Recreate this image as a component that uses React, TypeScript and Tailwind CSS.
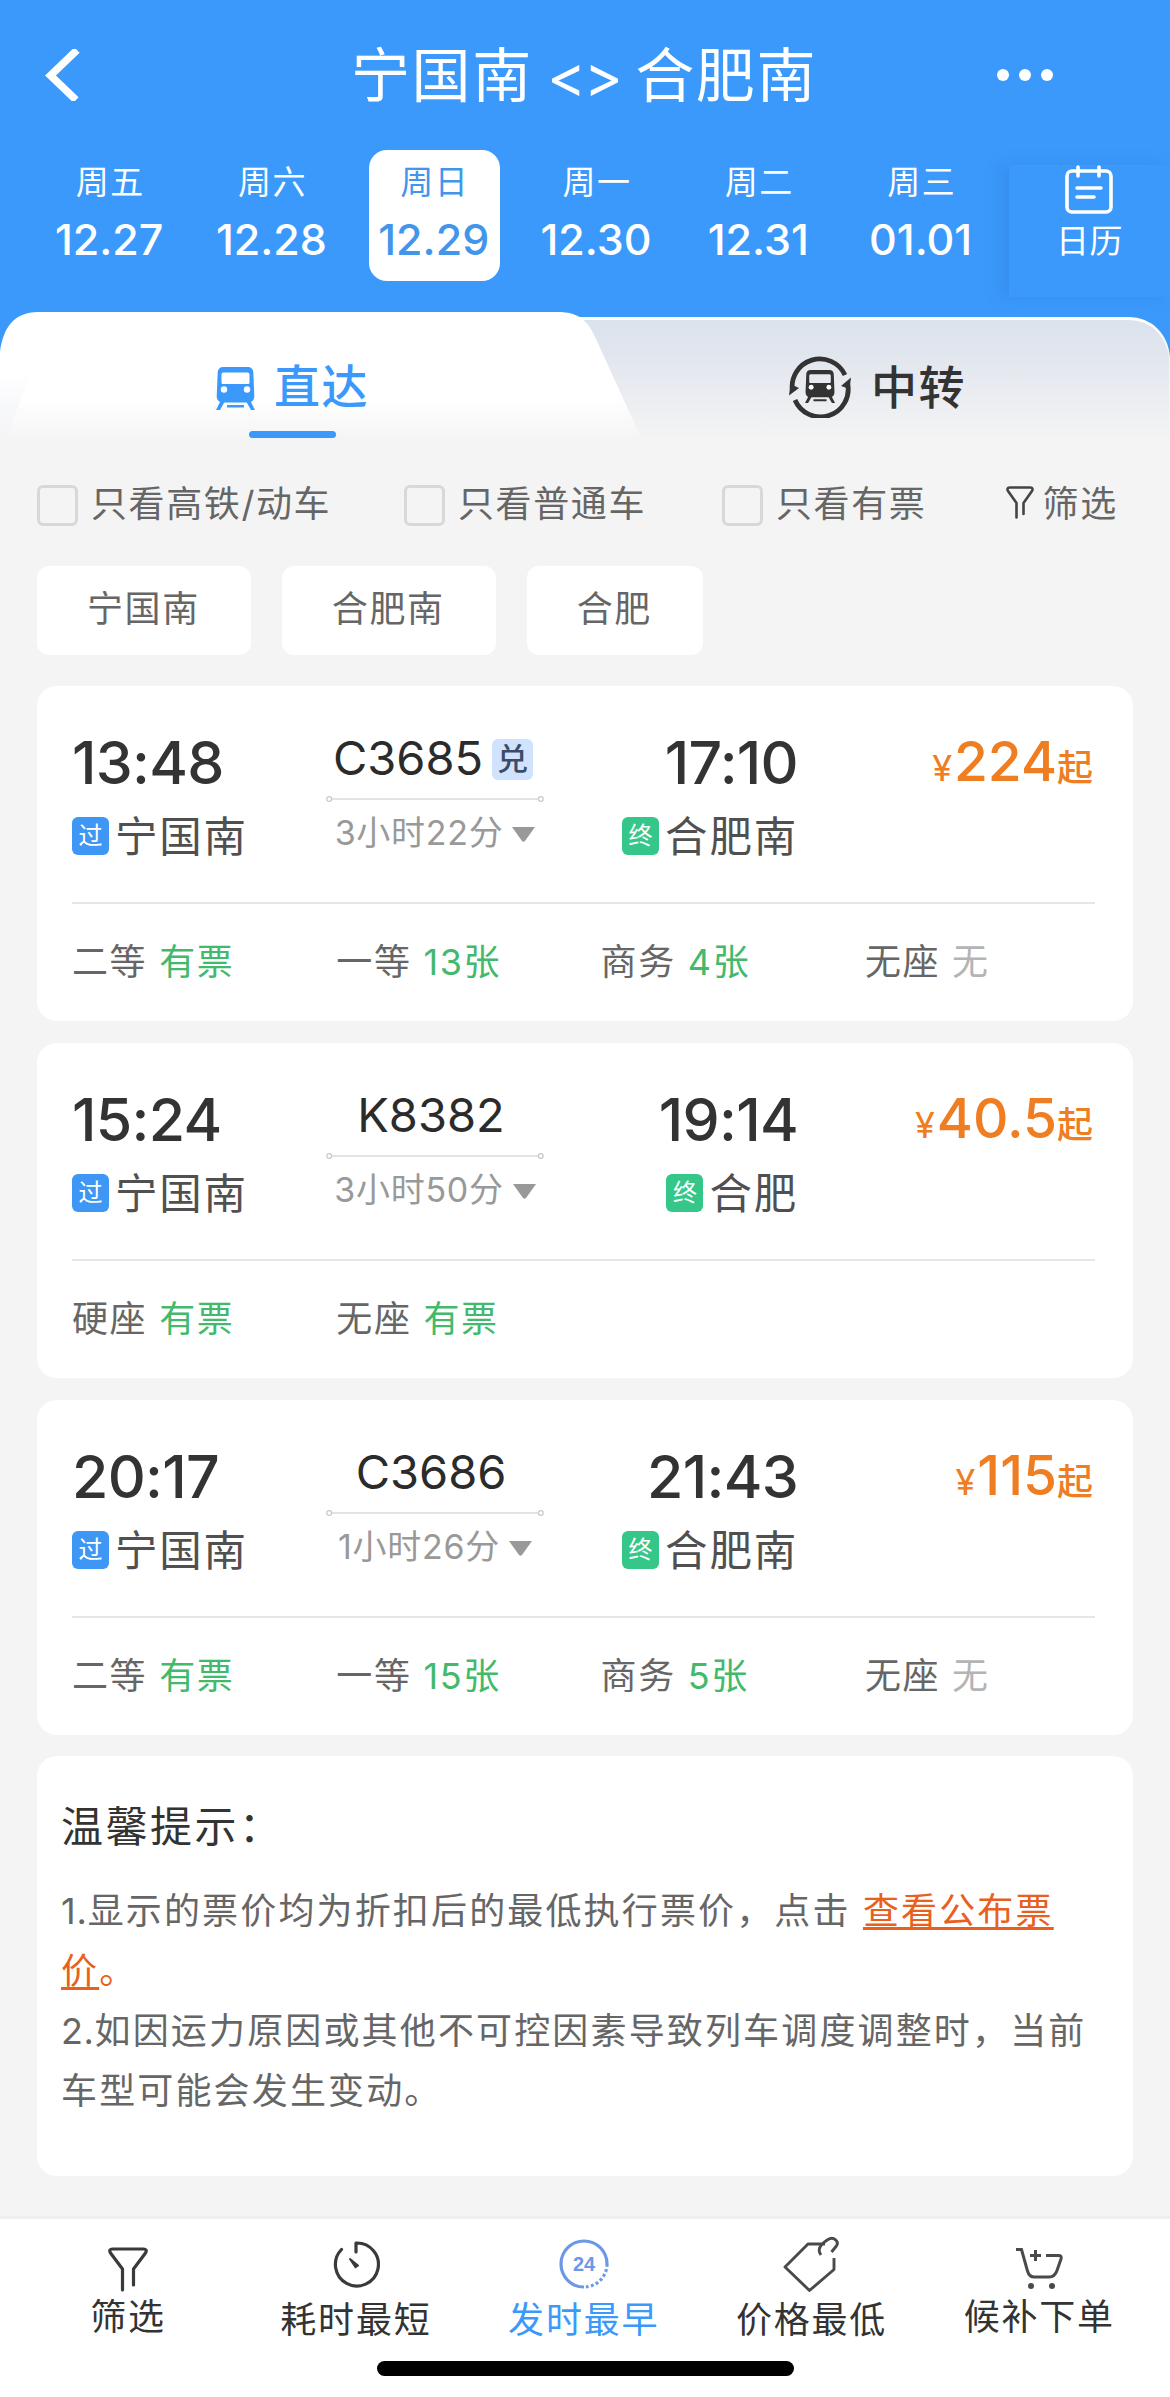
import React from "react";

type Seat = { name: string; value: string; none?: boolean };
type Train = {
  dep: string;
  from: string;
  no: string;
  exchange?: boolean;
  duration: string;
  arr: string;
  to: string;
  price: string;
  seats: Seat[];
};

const days = [
  ["周五", "12.27"],
  ["周六", "12.28"],
  ["周日", "12.29"],
  ["周一", "12.30"],
  ["周二", "12.31"],
  ["周三", "01.01"],
];

const trains: Train[] = [
  {
    dep: "13:48",
    from: "宁国南",
    no: "C3685",
    exchange: true,
    duration: "3小时22分",
    arr: "17:10",
    to: "合肥南",
    price: "224",
    seats: [
      { name: "二等", value: "有票" },
      { name: "一等", value: "13张" },
      { name: "商务", value: "4张" },
      { name: "无座", value: "无", none: true },
    ],
  },
  {
    dep: "15:24",
    from: "宁国南",
    no: "K8382",
    duration: "3小时50分",
    arr: "19:14",
    to: "合肥",
    price: "40.5",
    seats: [
      { name: "硬座", value: "有票" },
      { name: "无座", value: "有票" },
    ],
  },
  {
    dep: "20:17",
    from: "宁国南",
    no: "C3686",
    duration: "1小时26分",
    arr: "21:43",
    to: "合肥南",
    price: "115",
    seats: [
      { name: "二等", value: "有票" },
      { name: "一等", value: "15张" },
      { name: "商务", value: "5张" },
      { name: "无座", value: "无", none: true },
    ],
  },
];

function Header() {
  return (
    <header className="h-[312px] text-white">
      <div className="flex h-[150px] items-center justify-between pl-[45px] pr-[117px]">
        <svg width="36" height="52" viewBox="0 0 36 52" fill="none">
          <path d="M32 1 L5.500 26.500 L31 51" stroke="#fff" strokeWidth="7.500" />
        </svg>
        <h1 className="ml-[90px] mt-[2px] whitespace-pre text-[59px] leading-[80px] tracking-[1.6px] [word-spacing:-4px]">宁国南 <span className="tracking-[-2px]">&lt;&gt;</span> 合肥南</h1>
        <svg width="56" height="14" viewBox="0 0 56 14" fill="#fff">
          <circle cx="6" cy="7" r="6" />
          <circle cx="28" cy="7" r="6" />
          <circle cx="50" cy="7" r="6" />
        </svg>
      </div>
      <div className="flex pl-[29px]">
        {days.map(([w, d], i) => (
          <div key={d} className="flex w-[162.3px] justify-center">
            <div
              className={
                i === 2
                  ? "flex h-[131px] w-[131px] flex-col items-center rounded-[18px] bg-white pt-3 text-[#4196ec]"
                  : "flex h-[131px] w-[131px] flex-col items-center pt-3"
              }
            >
              <span className="text-[33px] leading-[40px] tracking-[1.5px]">{w}</span>
              <span className="mr-[2px] mt-[15px] text-[43px] font-[450] leading-[44px] tracking-[0px]">{d}</span>
            </div>
          </div>
        ))}
        <div className="ml-[6px] mt-[15px] flex h-[132px] flex-1 flex-col items-center bg-[#3b99fc] shadow-[-8px_0_14px_rgba(40,110,200,0.25)]">
          <svg width="48" height="50" viewBox="0 0 48 50" fill="none" stroke="#fff" strokeWidth="3.6" strokeLinecap="round">
            <rect x="2" y="6" width="44" height="41" rx="5" />
            <path d="M13 2v9M34 2v9M12 23h24M12 32h17" />
          </svg>
          <span className="mt-[6px] text-[33px] leading-[40px] tracking-[0.5px]">日历</span>
        </div>
      </div>
    </header>
  );
}

function TrainGlyph() {
  return (
    <g fill="currentColor">
      <path d="M4.500 34l4 1-4.500 8H0zM34.500 34l-4 1 4.500 8h4zM11 38h17v2.600H11z" />
      <path
        fillRule="evenodd"
        d="M7 0h25c3 0 5 2 5.300 5l1 24c0 4-2.500 6.500-6 6.500H6.700C3.200 35.500 .7 33 .7 29l1-24C2 2 4 0 7 0zM7.500 5.500c-1.200 0-2 .8-2 2V15.500c0 1 .8 1.500 1.800 1.500h24.400c1 0 1.800-.5 1.800-1.500V7.500c0-1.200-.8-2-2-2z"
      />
      <circle cx="8" cy="22.500" r="3.200" fill="#fff" />
      <circle cx="31" cy="22.500" r="3.200" fill="#fff" />
    </g>
  );
}

function Tabs() {
  return (
    <div className="relative flex h-[148px]">
      <svg className="absolute inset-0" width="1170" height="148" viewBox="0 0 1170 148">
        <defs>
          <linearGradient id="idle" x1="0" y1="0" x2="0" y2="1">
            <stop offset="0" stopColor="#dae2ec" />
            <stop offset="0.4" stopColor="#e4e8ef" />
            <stop offset="1" stopColor="#f4f4f4" />
          </linearGradient>
          <linearGradient id="rim" x1="0" y1="0" x2="0" y2="1">
            <stop offset="0" stopColor="#fff" />
            <stop offset="0.3" stopColor="#f4f4f4" />
          </linearGradient>
          <linearGradient id="active" x1="0" y1="0" x2="0" y2="1">
            <stop offset="0.66" stopColor="#fff" />
            <stop offset="1" stopColor="#f4f4f4" />
          </linearGradient>
          <linearGradient id="edge" x1="0" y1="0" x2="0" y2="1">
            <stop offset="0" stopColor="#fff" />
            <stop offset="0.5" stopColor="#f7f8fb" />
            <stop offset="1" stopColor="#f4f4f4" />
          </linearGradient>
        </defs>
        <path d="M0 45V148H1170V45C1168 22 1152 5 1128 5H300z" fill="url(#rim)" />
        <path d="M500 8H1128C1150 8 1165 22 1169 45V128H500z" fill="url(#idle)" />
        <rect y="128" width="1170" height="20" fill="#f4f4f4" />
        <path d="M0 40C3 16 14 0 38 0H558C578 0 588 8 596 27L643 130H0z" fill="url(#active)" />
        <path d="M0 62H31L4 130H0z" fill="url(#edge)" />
      </svg>
      <div className="relative flex w-[585px] flex-col items-center">
        <div className="mt-[44px] flex h-[60px] items-center text-[#3b99fc]">
          <svg className="mt-1" width="39" height="43" viewBox="0 0 39 43"><TrainGlyph /></svg>
          <span className="ml-[19px] text-[46px] font-medium leading-[60px] tracking-[1.4px]">直达</span>
        </div>
        <div className="mt-[15px] h-[7px] w-[87px] rounded-full bg-[#3b99fc]" />
      </div>
      <div className="relative flex flex-1 justify-center">
        <div className="mt-[45px] flex h-[60px] items-center text-[#333]">
          <svg width="62" height="62" viewBox="0 0 62 62" fill="none">
            <g transform="translate(16 14) scale(.77)"><TrainGlyph /></g>
            <path d="M3.500 35A27.700 27.700 0 0 1 56 19M58.500 27A27.700 27.700 0 0 1 6 44" stroke="currentColor" strokeWidth="4.800" />
            <path d="M0 39.500L1.500 28L10 32zM62 21.500L60.500 33L52 30z" fill="currentColor" />
          </svg>
          <span className="ml-5 text-[46px] font-medium leading-[60px] tracking-[1.4px]">中转</span>
        </div>
      </div>
    </div>
  );
}

function Check({ label }: { label: string }) {
  return (
    <label className="flex items-center">
      <span className="mt-[2px] h-[41px] w-[41px] rounded-[6px] border-[3px] border-[#d8d8d8]" />
      <span className="ml-[13px] whitespace-nowrap text-[36px] leading-[44px] tracking-[1.6px]">{label}</span>
    </label>
  );
}

function Filters() {
  return (
    <>
      <div className="flex h-[88px] items-center pl-[37px] pr-[52px] text-[#666]">
        <div className="w-[367px]"><Check label="只看高铁/动车" /></div>
        <div className="w-[318px]"><Check label="只看普通车" /></div>
        <Check label="只看有票" />
        <svg className="-mt-[3px] ml-auto" width="28" height="33" viewBox="0 0 28 33" fill="none" stroke="#444" strokeWidth="2.600" strokeLinecap="round" strokeLinejoin="round">
          <path d="M10.500 31.500V17L2 5C1 3 1.500 1.500 3.500 1.500h21c2 0 2.500 1.500 1.500 3.500L17.500 17v11" />
        </svg>
        <span className="ml-[9px] text-[36px] leading-[44px] tracking-[1.7px]">筛选</span>
      </div>
      <div className="mt-[18px] flex gap-[31px] pl-[37px] text-[#666]">
        {["宁国南", "合肥南", "合肥"].map((s) => (
          <span key={s} className="h-[89px] rounded-[12px] bg-white pl-[50px] pr-[51px] text-[36px] leading-[87px] tracking-[1.6px]">{s}</span>
        ))}
      </div>
    </>
  );
}

function Station({ tag, name, end }: { tag: string; name: string; end?: boolean }) {
  return (
    <div className={end ? "flex items-center justify-end" : "flex items-center"}>
      <span
        className={
          end
            ? "h-[38px] w-[37px] rounded-[6px] bg-[#35c78a] text-center text-[24px] leading-[37px] text-white"
            : "h-[38px] w-[37px] rounded-[6px] bg-[#3e96f5] text-center text-[24px] leading-[37px] text-white"
        }
      >
        {tag}
      </span>
      <span className="ml-[6px] mt-[2px] text-[42.500px] leading-[50px] tracking-[1.800px] text-[#505050]">{name}</span>
    </div>
  );
}

function TrainCard({ t }: { t: Train }) {
  return (
    <section className="h-[335px] rounded-[20px] bg-white pl-[35px] pr-[38px]">
      <div className="grid h-[216px] grid-cols-[254px_218px_254px_1fr]">
        <div>
          <div className="mt-[47px] h-[60px] text-[59px] font-[450] leading-[60px] tracking-[-0.7px] text-[#333]">{t.dep}</div>
          <div className="mt-[17px]"><Station tag="过" name={t.from} /></div>
        </div>
        <div>
          <div className="mt-[47px] flex h-[50px] items-center justify-center pr-[8px] text-[47px] leading-[50px] text-[#2b2b2b]">
            {t.no}
            {t.exchange && (
              <span className="-mr-[4px] ml-[9px] mt-[2px] h-[41px] w-[41px] rounded-[6px] bg-[#cfe3fd] text-center text-[31px] font-medium leading-[40px] text-[#3c4c68]">兑</span>
            )}
          </div>
          <svg className="mt-[13px]" width="218" height="6" viewBox="0 0 218 6" fill="#fff" stroke="#c8c8c8" strokeWidth="1.200">
            <path d="M5 3h208" />
            <circle cx="3.200" cy="3" r="2.400" />
            <circle cx="214.800" cy="3" r="2.400" />
          </svg>
          <div className="mt-[11px] flex h-[40px] items-center justify-center text-[34px] leading-[40px] tracking-[0.7px] text-[#999]">
            {t.duration}
            <svg className="ml-[9px] mt-[2px]" width="23" height="15" viewBox="0 0 23 15" fill="#999"><path d="M0 0h23L13 14q-1.500 1.500-3 0z" /></svg>
          </div>
        </div>
        <div>
          <div className="mt-[47px] h-[60px] text-right text-[59px] font-[450] leading-[60px] tracking-[-0.7px] text-[#333]">{t.arr}</div>
          <div className="mt-[17px]"><Station tag="终" name={t.to} end /></div>
        </div>
        <div className="mt-[45px] flex h-[60px] items-baseline justify-end pr-[2px] font-medium leading-[60px] text-[#ef7d22]">
          <span className="text-[36px] font-normal">¥</span>
          <span className="ml-[2px] text-[55px]">{t.price}</span>
          <span className="text-[36px]">起</span>
        </div>
      </div>
      <div className="h-[2px] bg-[#e6e6e6]" />
      <div className="mt-[36px] flex">
        {t.seats.map((s) => (
          <div key={s.name} className="flex w-[264.300px] shrink-0 text-[36px] leading-[44px] tracking-[1.6px] text-[#666]">
            {s.name}
            <span className={s.none ? "ml-[12px] text-[#b4b4b4]" : "ml-[12px] text-[#43b96b]"}>{s.value}</span>
          </div>
        ))}
      </div>
    </section>
  );
}

function Tips() {
  return (
    <section className="-mt-px h-[420px] rounded-[20px] bg-white pl-[24px] pt-[41px]">
      <h2 className="text-[42px] leading-[60px] tracking-[2.500px] text-[#333]">温馨提示：</h2>
      <div className="mt-[24px] whitespace-pre text-[36px] leading-[60px] tracking-[2.150px] text-[#666]">
        <p>
          <span className="tracking-[0.800px]">1.</span>显示的票价均为折扣后的最低执行票价，点击 <a className="text-[#e8601c] underline decoration-[3px] underline-offset-[3px]">查看公布票</a>
        </p>
        <p className="text-[#e8601c]">
          <a className="underline decoration-[3px] underline-offset-[3px]">价</a>。
        </p>
        <p><span className="tracking-[0.600px]">2.</span>如因运力原因或其他不可控因素导致列车调度调整时，当前</p>
        <p>车型可能会发生变动。</p>
      </div>
    </section>
  );
}

function BottomBar() {
  const label = "text-[36px] leading-[44px] tracking-[1.800px]";
  return (
    <nav className="mt-[40px] h-[182px] border-t-[3px] border-[#eeeeee] bg-white text-[#333]">
      <div className="flex h-[142px] pl-[14px]">
        <div className="flex w-[228px] flex-col items-center pt-[28px]">
          <svg width="40" height="45" viewBox="0 0 40 45" fill="none" stroke="#3a3a3a" strokeWidth="3.200" strokeLinecap="round" strokeLinejoin="round">
            <path d="M14.500 43V22L2.500 6C1 3.500 2 2 4.500 2h31c2.500 0 3.500 1.500 2 4L25.500 22v16" />
          </svg>
          <span className={label + " mt-[3px]"}>筛选</span>
        </div>
        <div className="flex w-[227.800px] flex-col items-center pt-[20px]">
          <svg width="48" height="50" viewBox="0 0 48 50" fill="none" stroke="#3a3a3a" strokeWidth="3.200" strokeLinecap="round" strokeLinejoin="round">
            <path d="M24 13V4A21.500 21.500 0 1 1 9.500 10.500" />
            <path d="M18 20l8 6.500-2.500 1.800z" fill="#3a3a3a" strokeWidth="2" />
          </svg>
          <span className={label + " mt-[9px]"}>耗时最短</span>
        </div>
        <div className="flex w-[227.800px] flex-col items-center pt-[20px] text-[#3b99fc]">
          <svg width="50" height="50" viewBox="0 0 50 50" fill="none" stroke="#6c98e6" strokeWidth="3.200">
            <path d="M48 25A23 23 0 1 0 25 48" />
            <path d="M48 25A23 23 0 0 1 25 48" strokeDasharray="2.800 2.400" />
            <text x="25" y="32" textAnchor="middle" className="font-['Liberation_Sans']" fontSize="20" fontWeight="700" fill="#6c98e6" stroke="none">24</text>
          </svg>
          <span className={label + " mt-[9px]"}>发时最早</span>
        </div>
        <div className="flex w-[227.800px] flex-col items-center pt-[17px]">
          <svg width="56" height="56" viewBox="0 0 56 56" fill="none" stroke="#4a4a4a" strokeWidth="2.900" strokeLinejoin="round">
            <path d="M51 22v11.500L26.500 54.500L2 31L25 8h17" />
            <path d="M38 19C33.500 13 38 8 45 3.500C50.500 0 57 5.500 53 10.500L48.500 16" />
          </svg>
          <span className={label + " mt-[6px]"}>价格最低</span>
        </div>
        <div className="flex w-[227.800px] flex-col items-center pt-[27px]">
          <svg width="48" height="44" viewBox="0 0 48 44" fill="none" stroke="#4a4a4a" strokeWidth="3">
            <path d="M1 3.500h5.500L12.500 25c1.200 4 3 6 6.500 6h15c4 0 6.500-2 8-6.500l4-11.500c.700-2.500-.500-3.500-2.500-3.500H31" />
            <path d="M20.500 4v11M15 9.500h11" />
            <circle cx="16" cy="40" r="3" fill="#4a4a4a" stroke="none" />
            <circle cx="37" cy="40" r="3" fill="#4a4a4a" stroke="none" />
          </svg>
          <span className={label + " mt-[5px]"}>候补下单</span>
        </div>
      </div>
      <div className="mx-auto h-[15px] w-[417px] rounded-full bg-black" />
    </nav>
  );
}

export default function App() {
  return (
    <div className="h-[2397px] w-[1170px] overflow-hidden bg-[#f4f4f4] font-['Inter','Noto_Sans_CJK_SC',sans-serif]">
      <div className="h-[360px] bg-[#3b99fc]">
        <Header />
        <Tabs />
      </div>
      <div className="h-[100px]" />
      <Filters />
      <main className="mt-[31px] flex flex-col gap-[22px] px-[37px]">
        {trains.map((t) => (
          <TrainCard key={t.no} t={t} />
        ))}
        <Tips />
      </main>
      <BottomBar />
    </div>
  );
}
